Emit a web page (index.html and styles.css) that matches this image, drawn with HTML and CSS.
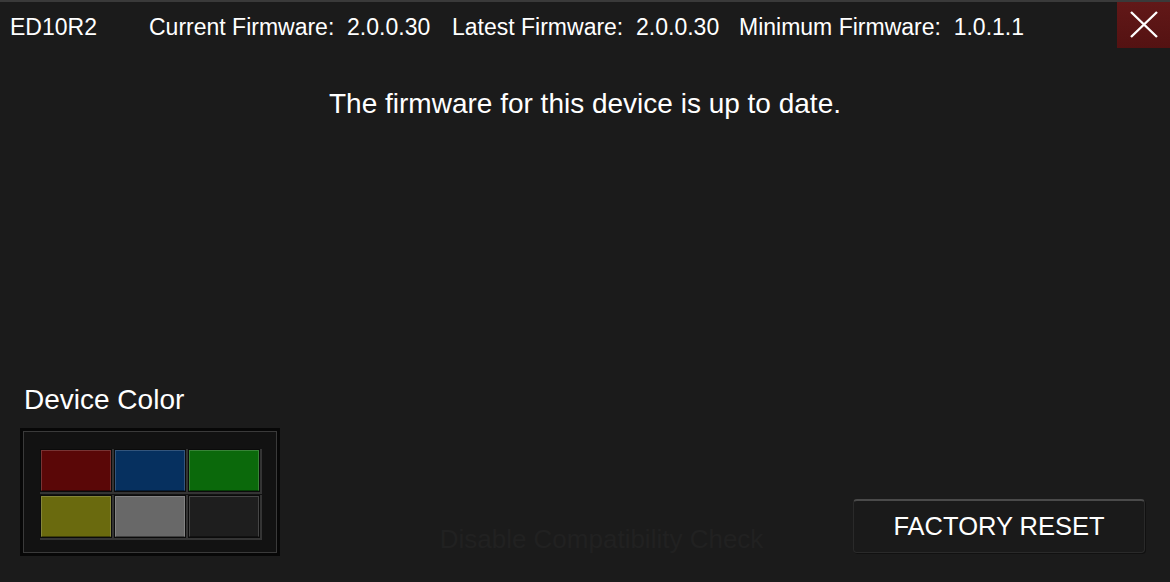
FILE: index.html
```html
<!DOCTYPE html>
<html lang="en">
<head>
    <meta charset="UTF-8">
    <meta name="viewport" content="width=device-width, initial-scale=1.0">
    <title>Firmware</title>
    <link rel="stylesheet" href="styles.css">
</head>
<body>
    <div class="topbar">
        <span class="model">ED10R2</span>
        <span class="info info-current">Current Firmware:&nbsp; 2.0.0.30</span>
        <span class="info info-latest">Latest Firmware:&nbsp; 2.0.0.30</span>
        <span class="info info-min">Minimum Firmware:&nbsp; 1.0.1.1</span>
        <button class="close-btn" title="Close">
            <svg width="28" height="28" viewBox="0 0 28 28">
                <path d="M1 1 L27 26 M27 1 L1 26" stroke="#fff" stroke-width="2.4" fill="none"/>
            </svg>
        </button>
    </div>

    <p class="status">The firmware for this device is up to date.</p>

    <div class="bottom">
        <div class="color-section">
            <div class="color-label">Device Color</div>
            <div class="swatch-panel">
                <div class="swatch red"></div>
                <div class="swatch blue"></div>
                <div class="swatch green"></div>
                <div class="swatch yellow"></div>
                <div class="swatch gray"></div>
                <div class="swatch black"></div>
            </div>
        </div>
        <div class="compat">Disable Compatibility Check</div>
        <button class="reset-btn">FACTORY RESET</button>
    </div>
</body>
</html>
```

FILE: styles.css
```css
html, body {
    margin: 0;
    height: 100%;
}
body {
    background-color: #1b1b1b;
    color: #fff;
    font-family: "Liberation Sans", Arial, sans-serif;
    display: flex;
    flex-direction: column;
    overflow: hidden;
}
.topbar {
    display: flex;
    align-items: center;
    border-top: 2px solid #3a3a3a;
    height: 46px;
    font-size: 23px;
}
.model,
.info {
    padding-top: 5px;
}
.model {
    margin-left: 10px;
    width: 139px;
}
.info-current {
    width: 303px;
}
.info-latest {
    width: 287px;
}
.close-btn {
    margin-left: auto;
    width: 53px;
    height: 46px;
    border: none;
    padding: 0;
    background: linear-gradient(#621818, #541212);
    display: flex;
    align-items: center;
    justify-content: center;
    cursor: pointer;
}
.status {
    margin: 40px 0 0;
    text-align: center;
    font-size: 28px;
    line-height: 32px;
}
.bottom {
    margin-top: auto;
    display: flex;
    align-items: flex-end;
    padding: 0 25px 26px 20px;
}
.color-section {
    width: 260px;
}
.color-label {
    font-size: 28px;
    line-height: 32px;
    margin-left: 4px;
    margin-bottom: 12px;
}
.swatch-panel {
    box-sizing: border-box;
    width: 260px;
    height: 128px;
    border: 3px solid #070707;
    box-shadow: inset 0 0 0 1px #3a3a3a;
    background-color: #121212;
    padding: 19px 18px;
    display: grid;
    grid-template-columns: repeat(3, 70px);
    grid-template-rows: 41px 41px;
    gap: 5px 4px;
}
.swatch {
    border: 1px solid rgba(255, 255, 255, 0.18);
    border-bottom-color: rgba(0, 0, 0, 0.4);
    box-shadow: 0 0 0 1px #0b0b0b, 1px 1px 0 2px #343434;
}
.red { background-color: #5a0707; }
.blue { background-color: #06305f; }
.green { background-color: #0b690b; }
.yellow { background-color: #6a6a0e; }
.gray { background-color: #686868; }
.black { background-color: #1e1e1e; }
.compat {
    flex: 1;
    text-align: center;
    padding-left: 70px;
    font-size: 26px;
    color: #212121;
    margin-bottom: 1px;
}
.reset-btn {
    width: 292px;
    height: 54px;
    background-color: #1a1a1a;
    color: #fff;
    font-family: "Liberation Sans", Arial, sans-serif;
    font-size: 25.5px;
    border: 1px solid #2a2a2a;
    border-top: 2px solid #4a4a4a;
    border-radius: 4px;
    box-shadow: 1px 1px 0 #111;
    cursor: pointer;
    margin-bottom: 3px;
}
```
